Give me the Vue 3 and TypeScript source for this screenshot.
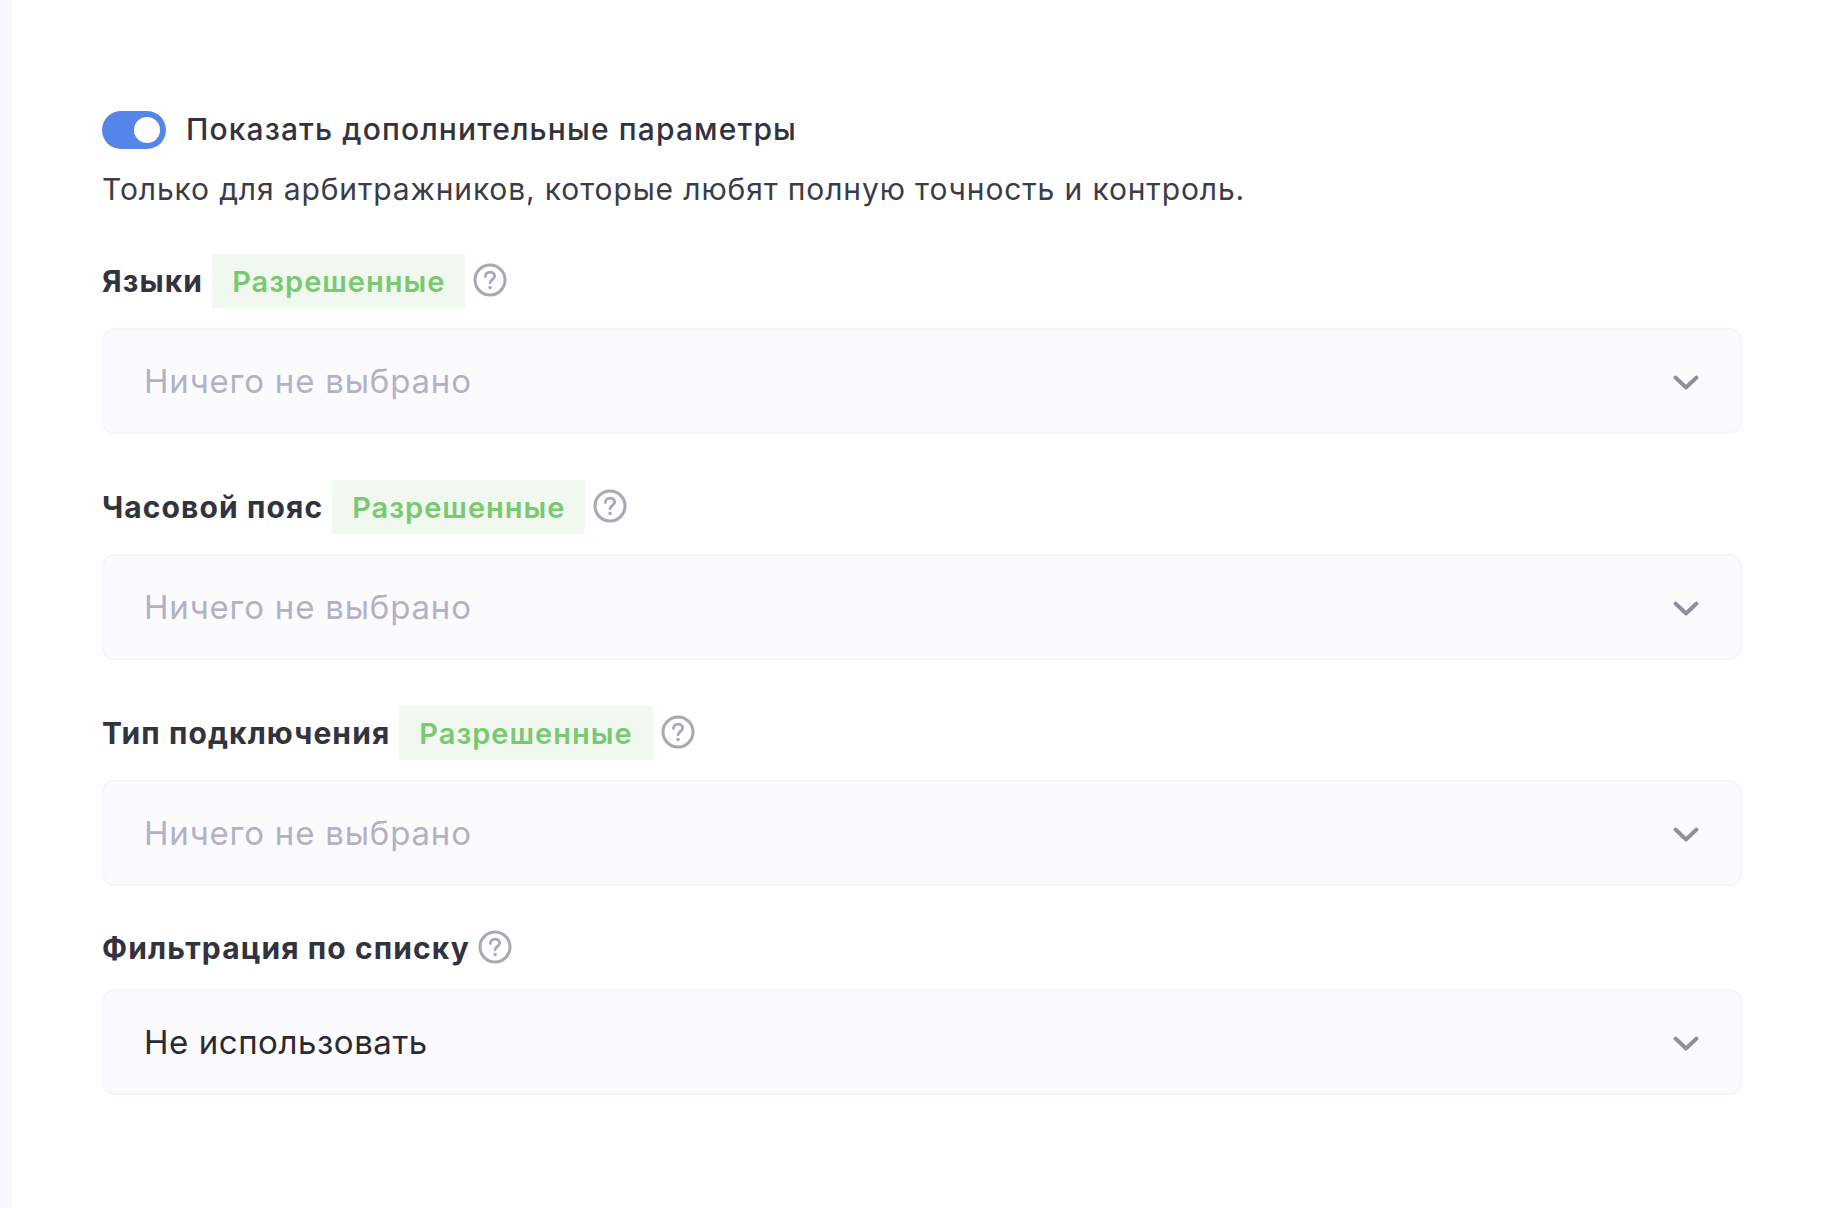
<script setup lang="ts">
interface Field {
  label: string;
  tag?: string;
  value: string;
  placeholder: boolean;
}

const fields: Field[] = [
  { label: "Языки", tag: "Разрешенные", value: "Ничего не выбрано", placeholder: true },
  { label: "Часовой пояс", tag: "Разрешенные", value: "Ничего не выбрано", placeholder: true },
  { label: "Тип подключения", tag: "Разрешенные", value: "Ничего не выбрано", placeholder: true },
  { label: "Фильтрация по списку", value: "Не использовать", placeholder: false },
];
</script>

<template>
  <div class="page">
    <div class="strip"></div>
    <main class="content">
      <div class="switch-row">
        <span class="switch"><span class="knob"></span></span>
        <span class="switch-label">Показать дополнительные параметры</span>
      </div>
      <p class="hint">Только для арбитражников, которые любят полную точность и контроль.</p>

      <div v-for="field in fields" :key="field.label" class="field" :class="{ plain: !field.tag }">
        <div class="field-head">
          <span class="label">{{ field.label }}</span>
          <span v-if="field.tag" class="tag">{{ field.tag }}</span>
          <svg class="help" viewBox="0 0 34 34" fill="none">
            <circle cx="17" cy="17" r="15" stroke="#a9a8b3" stroke-width="3" />
            <path
              d="M12.4 13.6c0-2.7 2.1-4.4 4.7-4.4s4.6 1.7 4.6 3.9c0 3.4-4.6 3.4-4.6 6.7"
              stroke="#a9a8b3"
              stroke-width="2.8"
              stroke-linecap="round"
            />
            <circle cx="17.1" cy="24.6" r="1.8" fill="#a9a8b3" />
          </svg>
        </div>
        <div class="select">
          <span :class="field.placeholder ? 'placeholder' : 'value'">{{ field.value }}</span>
          <svg class="chevron" viewBox="0 0 26 16" fill="none">
            <path d="M2.5 2.5 13 12.5 23.5 2.5" stroke="#8f8e9e" stroke-width="3.8" stroke-linecap="round" stroke-linejoin="round" />
          </svg>
        </div>
      </div>
    </main>
  </div>
</template>

<style>
html,
body {
  margin: 0;
  background: #fff;
}
</style>

<style scoped>
.page {
  display: flex;
  width: 1826px;
  height: 1208px;
  overflow: hidden;
  background: #fff;
  font-family: "Inter", "Noto Sans", sans-serif;
  color: #33323f;
}

.strip {
  width: 12px;
  flex-shrink: 0;
  background: #f7f7fe;
}

.content {
  flex: 1;
  padding: 111px 84px 0 90px;
}

.switch-row {
  display: flex;
  align-items: center;
  gap: 20px;
  height: 38px;
}

.switch {
  display: flex;
  align-items: center;
  justify-content: flex-end;
  width: 64px;
  height: 38px;
  padding-right: 6px;
  box-sizing: border-box;
  border-radius: 19px;
  background: #5685ea;
}

.knob {
  width: 26px;
  height: 26px;
  border-radius: 50%;
  background: #fff;
}

.switch-label {
  position: relative;
  top: -1px;
  font-size: 30px;
  font-weight: 500;
  letter-spacing: 1.13px;
}

.hint {
  margin: 21px 0 0;
  font-size: 30px;
  line-height: 38px;
  letter-spacing: 0.87px;
  color: #3c3b48;
}

.field {
  margin-top: 46px;
}

.field.plain {
  margin-top: 41px;
}

.field-head {
  display: flex;
  align-items: center;
  height: 54px;
}

.plain .field-head {
  height: 42px;
}

.label {
  font-size: 30px;
  font-weight: 700;
  letter-spacing: 1.1px;
}

.tag {
  display: flex;
  align-items: center;
  height: 54px;
  margin-left: 9px;
  padding: 0 20px;
  background: #f0f8ef;
  color: #78c96f;
  font-size: 29px;
  font-weight: 600;
  letter-spacing: 1px;
}

.help {
  width: 34px;
  height: 34px;
  margin-left: 8px;
  margin-top: -3px;
}

.select {
  display: flex;
  align-items: center;
  justify-content: space-between;
  height: 106px;
  margin-top: 20px;
  padding: 0 41px 0 40px;
  box-sizing: border-box;
  border: 2px solid #f5f5fb;
  border-radius: 12px;
  background: #fbfbfe;
  font-size: 33px;
  letter-spacing: 0.8px;
}

.placeholder {
  color: #b3b2c4;
}

.value {
  color: #2a2a33;
  letter-spacing: 0.55px;
}

.chevron {
  width: 26px;
  height: 16px;
  margin-top: 4px;
}
</style>
